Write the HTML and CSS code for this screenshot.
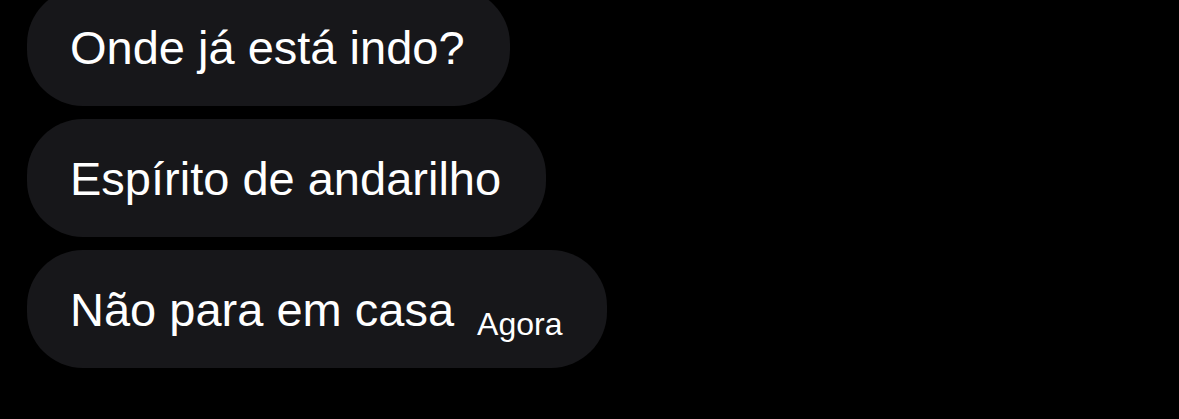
FILE: index.html
```html
<!DOCTYPE html>
<html lang="pt">
<head>
    <meta charset="UTF-8">
    <meta name="viewport" content="width=device-width, initial-scale=1.0">
    <title>Mensagens</title>
    <link rel="stylesheet" href="styles.css">
</head>
<body>
    <div class="thread">
        <div class="bubble">
            <span class="text">Onde já está indo?</span>
        </div>
        <div class="bubble">
            <span class="text">Espírito de andarilho</span>
        </div>
        <div class="bubble">
            <span class="text">Não para em casa</span>
            <span class="time">Agora</span>
        </div>
    </div>
</body>
</html>
```

FILE: styles.css
```css
body {
    margin: 0;
    padding: 0;
    background-color: #000;
    color: #fff;
    font-family: 'Liberation Sans', Arial, sans-serif;
    height: 100vh;
    overflow: hidden;
}

.thread {
    display: flex;
    flex-direction: column;
    align-items: flex-start;
    gap: 13px;
    margin-top: -12px;
    padding-left: 27px;
}

.bubble {
    display: flex;
    align-items: center;
    height: 118px;
    padding: 0 45px 0 43px;
    background-color: #17171a;
    border-radius: 56px;
    box-sizing: border-box;
}

.text {
    font-size: 47px;
    line-height: 1;
}

.time {
    font-size: 32px;
    line-height: 1;
    margin-left: 23px;
    position: relative;
    top: 15px;
}
```
